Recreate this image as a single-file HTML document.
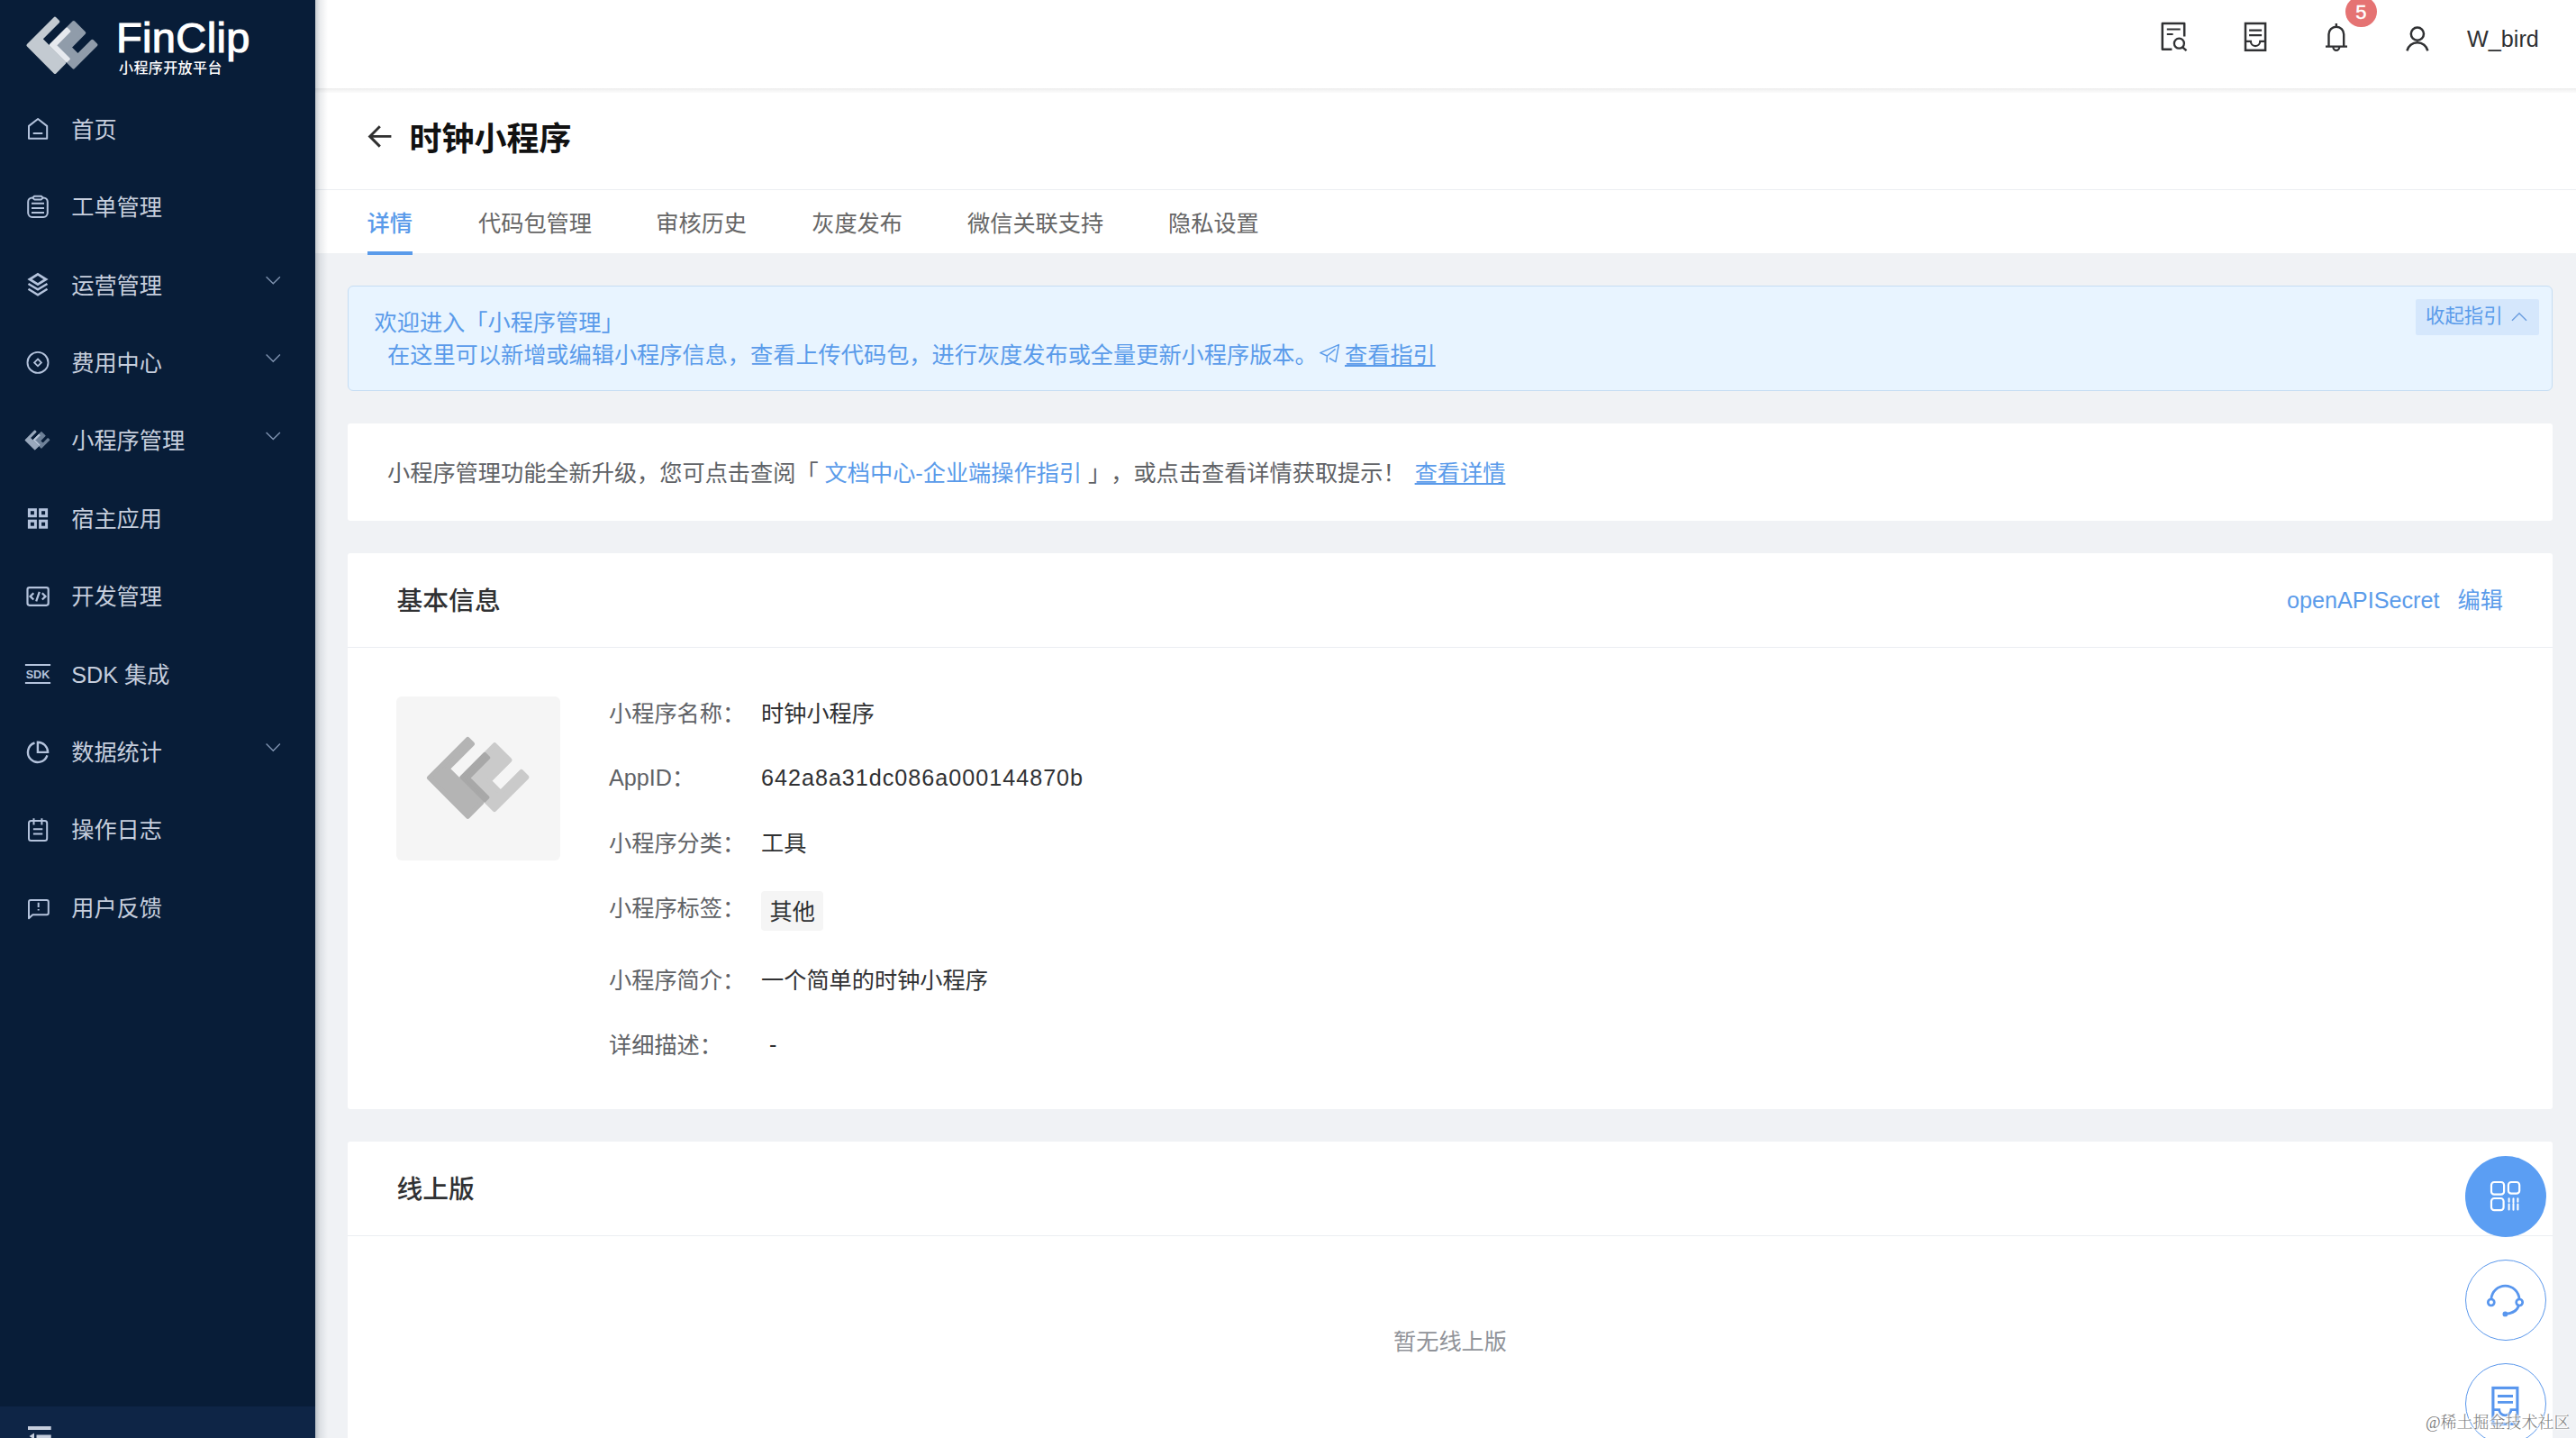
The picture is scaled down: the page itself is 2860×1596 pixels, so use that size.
<!DOCTYPE html>
<html lang="zh-CN">
<head>
<meta charset="utf-8">
<title>FinClip 小程序开放平台</title>
<style>
*{box-sizing:border-box;margin:0;padding:0}
html,body{width:2860px;height:1596px;overflow:hidden;background:#f0f2f5}
body{text-spacing-trim:space-all;font-family:"Liberation Sans","Noto Sans CJK SC",sans-serif;color:#303133;position:relative}
.abs{position:absolute}
.t{position:absolute;white-space:nowrap;line-height:1}
/* sidebar */
#side{position:absolute;left:0;top:0;width:350px;height:1596px;background:#081d38;z-index:5}
#sideshadow{position:absolute;left:350px;top:0;width:14px;height:1596px;background:linear-gradient(90deg,rgba(0,21,41,.22),rgba(0,21,41,.08) 40%,rgba(0,21,41,0));z-index:4}
#sidefoot{position:absolute;left:0;top:1561px;width:350px;height:35px;background:#0e2546}
.ml{font-size:25.2px;color:#c6cedd;margin-top:1.2px;margin-left:-0.8px}
.mi{position:absolute;left:0;width:350px;height:86px;color:#c2c9d4;font-size:24.6px}
.mi .lbl{position:absolute;left:80px;top:50%;transform:translateY(-50%);line-height:1;white-space:nowrap}
.mi svg.ic{position:absolute;left:28px;top:50%;margin-top:-14px;width:28px;height:28px;overflow:visible}
.mi svg.chev{position:absolute;left:294px;top:50%;margin-top:-9px;width:18px;height:10px}
/* header */
#hdr{position:absolute;left:350px;top:0;width:2510px;height:98px;background:#fff}
#hdrline{position:absolute;left:350px;top:98px;width:2510px;height:5px;background:linear-gradient(180deg,#ececec,#f7f7f7 60%,#fbfbfb)}
#phead{position:absolute;left:350px;top:103px;width:2510px;height:178px;background:#fff}
#pdiv{position:absolute;left:350px;top:210px;width:2510px;height:1px;background:#ebeef2}
.tab{position:absolute;top:235.7px;font-size:25.2px;line-height:1;color:#666;white-space:nowrap}
.tab.on{color:#5a9bea;font-weight:500}
.card{position:absolute;left:386px;width:2448px;background:#fff;border-radius:3px}
.ctitle{position:absolute;left:54.5px;font-size:28.8px;font-weight:500;color:#303133;line-height:1;white-space:nowrap}
.cdiv{position:absolute;left:0;width:100%;height:1px;background:#ebeef2}
.lab{position:absolute;left:676px;font-size:25.2px;color:#606266;line-height:1;white-space:nowrap}
.val{position:absolute;left:845px;font-size:25.2px;color:#303133;line-height:1;white-space:nowrap}
a{color:#5a9bea;text-decoration:none}
.fab{position:absolute;left:2737px;width:90px;height:90px;border-radius:50%;z-index:8}
</style>
</head>
<body>

<svg width="0" height="0" style="position:absolute"><defs>
<symbol id="fc" viewBox="0 0 1861 1438"><g transform="rotate(45)" stroke-linejoin="round">
<path d="M928,-553 H1204 V-175 H1416 V-553 H1515 V37 H928 Z" fill="var(--b)" stroke="var(--b)" stroke-width="60"/>
<path d="M631,-359 H715 V94 H1335 V343 H631 Z" fill="var(--a)" stroke="var(--a)" stroke-width="60"/>
<path d="M918,-383 H991 V-15 H1345 V47 H918 Z" fill="var(--w)" stroke="var(--w)" stroke-width="40"/>
</g></symbol></defs></svg>
<!-- ============ MAIN ============ -->
<div id="hdr"></div>
<div id="hdrline"></div>
<div id="phead"></div>
<div id="pdiv"></div>

<!-- header right -->
<svg class="abs" style="left:2380px;top:0" width="340" height="98" viewBox="2380 0 340 98" fill="none" stroke="#303133" stroke-width="2.4">
<path d="M2411.4 54.8 H2400.8 V26 H2425.2 V40.4" stroke-linejoin="round" stroke-width="2.5"/>
<path d="M2405.8 32.5 H2420.7 M2405.8 38 H2412.6" stroke-width="2.2"/>
<circle cx="2419.4" cy="48.2" r="5.5" stroke-width="2.3"/><path d="M2423.4 52.6 L2427.5 56.2" stroke-width="2.4"/>
<rect x="2493" y="26" width="22.1" height="29.8" stroke-width="2.5"/>
<path d="M2497.1 33.6 H2511.1 M2497.1 39.2 H2511.1" stroke-width="2.2"/>
<path d="M2493 45.9 H2498.9 A5.15 5.15 0 0 0 2509.2 45.9 H2515.1" stroke-width="2.2"/>
<path d="M2582 51.6 H2606 M2585.5 51.6 V38.1 A8.35 8.35 0 0 1 2602.2 38.1 V51.6 M2593.85 26 V29.7" />
<path d="M2590.4 52 A3.45 3.9 0 0 0 2597.3 52" stroke-width="2.2"/>
<circle cx="2683.9" cy="37.6" r="7.1" stroke-width="2.5"/>
<path d="M2672.4 56.4 A11.8 11.8 0 0 1 2695.4 56.4" stroke-width="2.5"/>
</svg>
<div class="abs" style="left:2604.2px;top:-4.3px;width:34.6px;height:34.6px;border-radius:50%;background:#e57373"></div>
<div class="t" id="badge" style="left:2604.2px;top:3px;width:34.6px;text-align:center;font-size:22px;color:#fff;font-weight:500;-webkit-text-stroke:.4px #fff">5</div>

<div class="t" id="uname" style="left:2739px;top:31px;font-size:25.2px;color:#303133">W_bird</div>

<!-- page title -->
<div class="t" id="ptitle" style="left:454.5px;top:137px;font-size:36px;font-weight:700;color:#111">时钟小程序</div>

<!-- tabs -->
<div class="tab on" style="left:407.5px">详情</div>
<div class="tab" style="left:531px">代码包管理</div>
<div class="tab" style="left:728.3px">审核历史</div>
<div class="tab" style="left:901.2px">灰度发布</div>
<div class="tab" style="left:1074px">微信关联支持</div>
<div class="tab" style="left:1297px">隐私设置</div>
<div class="abs" style="left:408px;top:279px;width:50px;height:4px;background:#5a9bea"></div>

<!-- banner -->
<div class="abs" id="banner" style="left:386px;top:317px;width:2448px;height:117px;background:#e8f4ff;border:1.2px solid #c6ddf3;border-radius:6px"></div>
<div class="t" style="left:415.5px;top:345.5px;font-size:25.2px;color:#5a9bea">欢迎进入「小程序管理」</div>
<div class="t" style="left:430px;top:381.5px;font-size:25.2px;color:#5a9bea">在这里可以新增或编辑小程序信息，查看上传代码包，进行灰度发布或全量更新小程序版本。</div>
<div class="t" style="left:1493px;top:381.5px;font-size:25.2px;color:#5a9bea;text-decoration:underline;text-decoration-thickness:2px;text-underline-offset:1.5px">查看指引</div>
<div class="abs" style="left:2682px;top:332px;width:137px;height:40px;background:#d5e7fc;border-radius:2px"></div>
<div class="t" style="left:2693px;top:341.2px;font-size:21.4px;color:#5a9bea">收起指引</div>

<!-- notice -->
<div class="card" style="top:470px;height:108px"></div>
<div class="t" id="notice" style="left:430px;top:512.8px;font-size:25.2px;color:#606266">小程序管理功能全新升级，您可点击查阅「 <a>文档中心-企业端操作指引</a> <span style="display:inline-block;width:1em">」</span><span style="display:inline-block;width:1em">，</span>或点击查看详情获取提示！ <a style="text-decoration:underline;text-decoration-thickness:2px;text-underline-offset:1.5px;margin-left:3px">查看详情</a></div>

<!-- basic info -->
<div class="card" style="top:614px;height:617px">
  <div class="ctitle" style="top:39.3px">基本信息</div>
  <div class="cdiv" style="top:104px"></div>
</div>
<div class="t" style="left:2539px;top:654px;font-size:25.2px;color:#5a9bea">openAPISecret</div>
<div class="t" style="left:2728.5px;top:654.3px;font-size:25.2px;color:#5a9bea">编辑</div>
<div class="abs" style="left:440px;top:773px;width:182px;height:182px;background:#f5f5f5;border-radius:6px"></div>

<svg class="abs" style="left:458.6px;top:803.7px;--a:#b4b4b4;--b:#cacaca;--w:#a8a8a8" width="160.2" height="123.8"><use href="#fc"/></svg>
<div class="lab" style="top:780px">小程序名称：</div><div class="val" style="top:780px">时钟小程序</div>
<div class="lab" style="top:851px">AppID：</div><div class="val" style="top:851px;letter-spacing:.97px">642a8a31dc086a000144870b</div>
<div class="lab" style="top:923.7px">小程序分类：</div><div class="val" style="top:923.7px">工具</div>
<div class="lab" style="top:995.7px">小程序标签：</div>
<div class="abs" style="left:845px;top:989px;width:69px;height:44px;background:#f5f5f5;border-radius:4px"></div>
<div class="val" style="left:854.5px;top:1000px;font-size:25.2px">其他</div>
<div class="lab" style="top:1075.5px">小程序简介：</div><div class="val" style="top:1075.5px">一个简单的时钟小程序</div>
<div class="lab" style="top:1147.7px">详细描述：</div><div class="val" style="left:854px;top:1146.6px">-</div>

<!-- online version -->
<div class="card" style="top:1267px;height:400px">
  <div class="ctitle" style="top:39px">线上版</div>
  <div class="cdiv" style="top:104px"></div>
</div>
<div class="t" style="left:1547px;top:1477px;font-size:25.2px;color:#909399">暂无线上版</div>


<!-- back arrow, plane, chevron -->
<svg class="abs" style="left:395px;top:125px" width="60" height="55" viewBox="395 125 60 55" fill="none" stroke="#303030" stroke-width="2.9"><path d="M421.8 140.3 L410.6 151.4 L421.8 162.6 M410.6 151.4 H434.4"/></svg>
<svg class="abs" style="left:1455px;top:375px" width="40" height="35" viewBox="1454 375 40 35" fill="none" stroke="#5a9bea" stroke-width="1.5" stroke-linejoin="round"><path d="M1481.6 387.4 L1472.4 395 L1464.8 391.6 L1485.4 382.6 L1481.9 401.6 L1475 397.5 M1472.4 395 L1472 402.4"/></svg>
<svg class="abs" style="left:2785px;top:343px" width="24" height="18" viewBox="2785 343 24 18" fill="none" stroke="#6d9fe0" stroke-width="1.5"><path d="M2789 355.7 L2797 347.8 L2805 355.7"/></svg>

<!-- FABs -->
<div class="fab" style="top:1283px;background:#5b9ef3"></div>
<div class="fab" style="top:1398px;background:#fff;border:1.5px solid #5b98ec"></div>
<div class="fab" style="top:1513px;background:#fff;border:1.5px solid #5b98ec"></div>
<svg class="abs" style="left:2737px;top:1283px;z-index:9" width="100" height="313" viewBox="2737 1283 100 313" fill="none">
<g stroke="#fff" stroke-width="2.2">
<rect x="2766" y="1312" width="14.1" height="13.6" rx="3.2"/>
<rect x="2784.9" y="1312" width="12.3" height="12.7" rx="3.2"/>
<rect x="2766" y="1330" width="13.6" height="13.2" rx="3.2"/>
<path d="M2785.6 1330.3 V1333.8 M2785.6 1336.5 V1342.4 M2790.5 1330.3 V1334.6 M2790.5 1336 V1342.8 M2795.4 1330.3 V1333.8 M2795.4 1336.5 V1342.4" stroke-linecap="round" stroke-width="2"/>
</g>
<g stroke="#5896ee" stroke-width="2.8" stroke-linecap="round">
<path d="M2765.9 1441.5 A15.6 15.6 0 0 1 2797 1441.5"/>
<circle cx="2765.8" cy="1445.5" r="3.5" stroke-width="2.7"/>
<circle cx="2797.2" cy="1445.5" r="3.5" stroke-width="2.7"/>
<path d="M2796.3 1449.6 Q2793.5 1457.3 2782 1458.4"/>
<circle cx="2781.4" cy="1458.4" r="1.6" fill="#5896ee" stroke-width="2.6"/>
</g>
<g stroke="#5896ee" stroke-width="3.1">
<rect x="2767.9" y="1540.4" width="27" height="40"/>
<path d="M2773 1549.5 H2790 M2773 1556.3 H2790" stroke-width="2.8"/>
<path d="M2768 1564.6 H2774.7 A6.65 6.2 0 0 0 2788 1564.6 H2795" stroke-width="2.8"/>
</g>
</svg>
<div class="t" id="wm" style="left:2693px;top:1570px;font-size:18px;font-weight:300;z-index:10;color:rgba(100,100,100,.85);font-family:'Liberation Serif','Noto Serif CJK SC',serif;text-shadow:0 0 2px #fff,0 0 2px #fff,1px 1px 1px #fff,-1px -1px 1px #fff">@稀土掘金技术社区</div>

<!-- ============ SIDEBAR ============ -->
<div id="sideshadow"></div>
<div id="side">
  <div id="sidefoot"></div>
  <div class="t ml" style="left:80px;top:130.7px">首页</div>
  <div class="t ml" style="left:80px;top:217.1px">工单管理</div>
  <div class="t ml" style="left:80px;top:303.5px">运营管理</div>
  <div class="t ml" style="left:80px;top:389.9px">费用中心</div>
  <div class="t ml" style="left:80px;top:476.3px">小程序管理</div>
  <div class="t ml" style="left:80px;top:562.7px">宿主应用</div>
  <div class="t ml" style="left:80px;top:649.1px">开发管理</div>
  <div class="t ml" style="left:80px;top:735.5px">SDK 集成</div>
  <div class="t ml" style="left:80px;top:821.9px">数据统计</div>
  <div class="t ml" style="left:80px;top:908.3px">操作日志</div>
  <div class="t ml" style="left:80px;top:994.7px">用户反馈</div>
  <svg class="abs" style="left:0;top:0" width="350" height="1596" viewBox="0 0 350 1596" fill="none" stroke="#b4c3dc" stroke-width="2">
  <path d="M295.6 825.6 L303.3 833.2 L310.9 825.6" stroke="#7f93b0" stroke-width="1.4"/>
  <path d="M295.6 307.2 L303.3 314.8 L310.9 307.2" stroke="#7f93b0" stroke-width="1.4"/>
  <path d="M295.6 393.6 L303.3 401.2 L310.9 393.6" stroke="#7f93b0" stroke-width="1.4"/>
  <path d="M295.6 480.0 L303.3 487.6 L310.9 480.0" stroke="#7f93b0" stroke-width="1.4"/>
  <path d="M42.1 132 L52.2 139.9 V153.8 H32 V139.9 Z" stroke-linejoin="round"/><path d="M36.7 148 H47.3"/>
  <rect x="31.2" y="219.4" width="21.6" height="21.5" rx="4.6"/><path d="M38.1 217.8 H45.9 L47.7 219.6 L45.9 221.4 H38.1 L36.3 219.6 Z" fill="#081d38" stroke-linejoin="round"/><path d="M35 225.7 H49 M35 230.9 H49 M35 236.1 H49"/>
  <path d="M42 304.4 L51 310 L42 315.6 L33 310 Z" stroke-width="2.8" stroke-linejoin="miter"/><path d="M31.5 315 L42 321.4 L52.5 315" stroke-width="2.5"/><path d="M31.5 320.8 L42 327.2 L52.5 320.8" stroke-width="2.5"/>
  <circle cx="42" cy="402.4" r="11.5" stroke-width="1.9"/><path d="M42 398.5 L45.9 402.4 L42 406.3 L38.1 402.4 Z" stroke-width="1.8"/>
  <rect x="32.4" y="565.7" width="7" height="7" stroke-width="3"/>
  <rect x="44.6" y="565.7" width="7" height="7" stroke-width="3"/>
  <rect x="32.4" y="578.2" width="7" height="7" stroke-width="3"/>
  <rect x="44.6" y="578.2" width="7" height="7" stroke-width="3"/>
  <rect x="30.5" y="652.1" width="23.2" height="19.7" rx="2.2" stroke-width="2.2"/><path d="M37.3 658.3 L33.6 661.9 L37.3 665.5 M46.8 658.3 L50.5 661.9 L46.8 665.5 M43.8 656.8 L40.2 667.4" stroke-width="2.3"/>
  <path d="M27.9 738 H56.1 M27.9 758 H56.1" stroke-width="2.1"/><text x="42" y="753.2" text-anchor="middle" font-family="Liberation Sans, sans-serif" font-weight="700" font-size="13.6" fill="#b4c3dc" stroke="none" textLength="26.6" lengthAdjust="spacingAndGlyphs">SDK</text>
  <path d="M41.9 823.7 A11.2 11.2 0 0 1 53.1 834.9 H41.9 Z" stroke-width="2.4" stroke-linejoin="miter"/><path d="M52.4 838.3 A11 11 0 1 1 38.5 824.5" stroke-width="2.4"/>
  <rect x="32" y="911" width="20.2" height="22" rx="2.5"/><path d="M37.5 908.3 V915.6 M46.4 908.3 V915.6 M36.9 920.2 H47.3 M36.9 925.4 H47.3"/>
  <path d="M32 1019.3 V1001 A2 2 0 0 1 34 999 H51.8 A2 2 0 0 1 53.8 1001 V1013.2 A2 2 0 0 1 51.8 1015.2 H36.3 Z" stroke-linejoin="round"/><path d="M42.7 1001.8 V1007 M42.7 1008.9 V1010.5"/>
  <path d="M31 1585 H56.7 M40.5 1594.6 H56.7" stroke-width="4" stroke="#c6cedd"/><path d="M32.5 1594 L38 1590.5 V1597.5 Z" fill="#c6cedd" stroke="none"/>
  </svg>
  <svg class="abs" style="left:19.2px;top:9.4px;--a:#c3cad1;--b:#909caa;--w:#e6e9ee" width="111.6" height="86.2"><use href="#fc"/></svg>
  <svg class="abs" style="left:24.4px;top:474.2px;--a:#9aa9bd;--b:#6e8198;--w:#b9c6d8" width="39" height="30.2"><use href="#fc"/></svg>
  <div class="t" id="brand" style="left:129px;top:17.5px;font-size:47px;color:#fff;letter-spacing:.35px;-webkit-text-stroke:1.1px #fff">FinClip</div>
  <div class="t" id="brandsub" style="left:132px;top:68px;font-size:16px;font-weight:500;color:#fff;letter-spacing:.4px">小程序开放平台</div>
</div>

</body>
</html>
